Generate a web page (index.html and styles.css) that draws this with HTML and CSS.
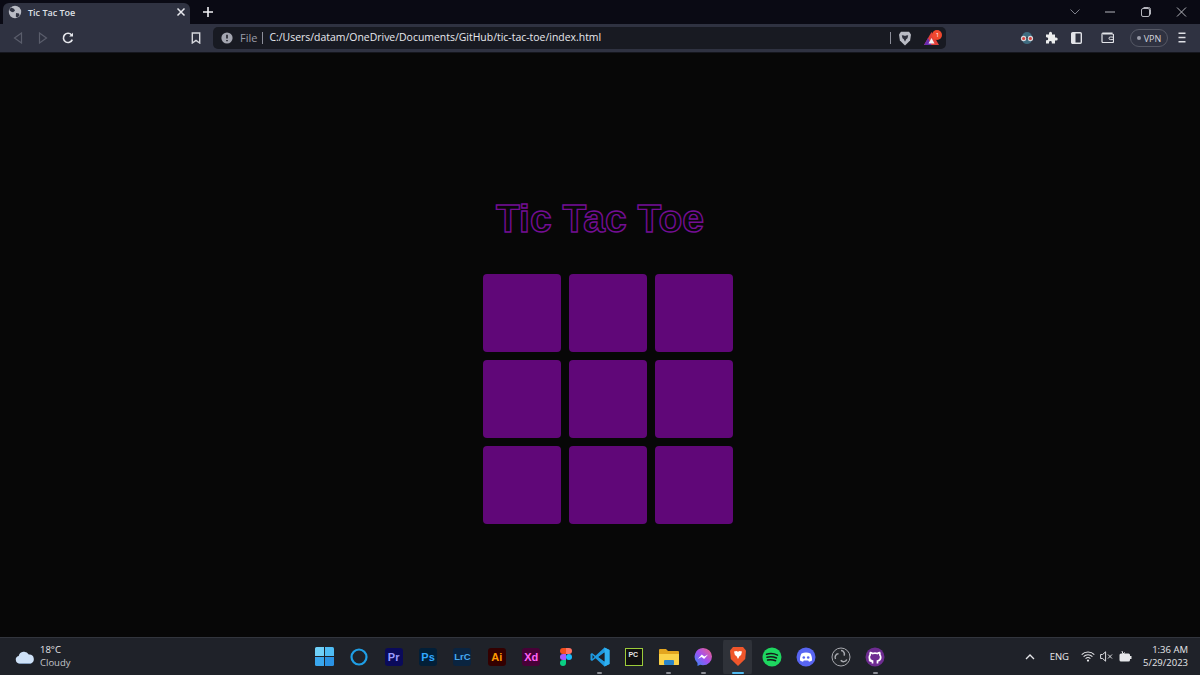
FILE: index.html
```html
<!DOCTYPE html>
<html lang="en">
<head>
<meta charset="utf-8">
<title>Tic Tac Toe</title>
<link rel="stylesheet" href="styles.css">
</head>
<body>
<div class="tabstrip">
  <div class="tab">
    <svg class="tab-globe" width="14" height="14" viewBox="0 0 14 14"><circle cx="7" cy="7" r="6.2" fill="#b9bbc4"/><path d="M3 2.5l3 1.2 1 2-2 1.6-1.8-.6-2-1.6zM8 8l3 .6.6 1.8-2.4 2.4-1.4-1.4z" fill="#2f3241"/></svg>
    <span class="tab-title">Tic Tac Toe</span>
    <svg class="tab-close" width="10" height="10" viewBox="0 0 10 10"><path d="M1.5 1.5l7 7M8.5 1.5l-7 7" stroke="#e8e9ee" stroke-width="1.5"/></svg>
  </div>
  <svg class="new-tab" width="12" height="12" viewBox="0 0 12 12"><path d="M6 1v10M1 6h10" stroke="#f1f1f4" stroke-width="1.6"/></svg>
  <div class="window-controls">
    <svg class="win-btn chevron" width="12" height="8" viewBox="0 0 12 8"><path d="M1.5 1.5L6 6l4.5-4.5" fill="none" stroke="#7d7f8a" stroke-width="1"/></svg>
    <svg class="win-btn" width="36" height="12" viewBox="0 0 36 12"><path d="M13 6h10" stroke="#b4b5bc" stroke-width="1"/></svg>
    <svg class="win-btn" width="36" height="12" viewBox="0 0 36 12"><rect x="13.5" y="2.5" width="8" height="8" rx="1.5" fill="none" stroke="#b4b5bc"/><path d="M15.5 1.5h5a2 2 0 0 1 2 2v5" fill="none" stroke="#b4b5bc"/></svg>
    <svg class="win-btn" width="36" height="12" viewBox="0 0 36 12"><path d="M13 1.5l9 9M22 1.5l-9 9" stroke="#b4b5bc" stroke-width="1"/></svg>
  </div>
</div>

<div class="toolbar">
  <div class="slot"><svg width="10" height="12" viewBox="0 0 10 12"><path d="M8.5 1L1.5 6l7 5z" fill="none" stroke="#5a5d6b" stroke-width="1.2"/></svg></div>
  <div class="slot"><svg width="10" height="12" viewBox="0 0 10 12"><path d="M1.5 1l7 5-7 5z" fill="none" stroke="#5a5d6b" stroke-width="1.2"/></svg></div>
  <div class="slot"><svg width="12" height="12" viewBox="0 0 12 12"><path d="M10.3 7.6A4.6 4.6 0 1 1 9.6 3" fill="none" stroke="#e6e7ec" stroke-width="1.6"/><path d="M11 .8v3.8H7.2z" fill="#e6e7ec"/></svg></div>
  <div class="slot bookmark"><svg width="10" height="12" viewBox="0 0 10 12"><path d="M1.3 1h7.4v10L5 8.4 1.3 11z" fill="none" stroke="#d6d7dd" stroke-width="1.4"/></svg></div>
  <div class="urlbar">
    <svg class="info" width="12" height="12" viewBox="0 0 12 12"><circle cx="6" cy="6" r="5.6" fill="#a4a6b0"/><path d="M6 2.8v3.6M6 8v1.3" stroke="#181a22" stroke-width="1.5"/></svg>
    <span class="file">File</span>
    <span class="sep"></span>
    <span class="url">C:/Users/datam/OneDrive/Documents/GitHub/tic-tac-toe/index.html</span>
    <span class="sep sep-right"></span>
    <svg class="shield" width="14" height="15" viewBox="0 0 14 15"><path d="M3 .8h8l2 2.600-.9 6L7 14.400 1.900 9.400 1 3.400z" fill="#b9bbc4"/><path d="M3.800 4.200l2.200.2L7 5l1-.6 2.200-.2-.7 3-1.300 1L7 10.800 5.800 8.200l-1.300-1z" fill="#2c2e3a"/></svg>
    <div class="rewards">
      <svg width="15" height="13" viewBox="0 0 15 13"><path d="M7.500 0L0 13h15z" fill="#e0403a"/><path d="M0 13L4 6l3.500 7z" fill="#6b2bb0"/><path d="M7.500 6l3 5.500h-6z" fill="#f4f4f6"/></svg>
      <span class="badge">1</span>
    </div>
  </div>
  <div class="slot incognito"><svg width="16" height="14" viewBox="0 0 16 14"><path d="M3 6a5 5 0 0 1 10 0z" fill="#3f6c80"/><path d="M3 8.500c.500 3 2.500 4.500 5 4.500s4.500-1.500 5-4.500z" fill="#3f6c80"/><circle cx="4.600" cy="7.500" r="2.700" fill="#d8d8dc"/><circle cx="11.400" cy="7.500" r="2.700" fill="#d8d8dc"/><circle cx="4.600" cy="7.500" r="1.500" fill="#d8403c"/><circle cx="11.400" cy="7.500" r="1.500" fill="#d8403c"/></svg></div>
  <div class="slot"><svg width="13" height="13" viewBox="0 0 13 13"><path d="M1 3.500h3V2.200a1.500 1.500 0 0 1 3 0v1.300h3v3h1.200a1.500 1.500 0 0 1 0 3H10V12.500H6.800v-1a1.400 1.400 0 0 0-2.800 0v1H1V9.300h.7a1.500 1.500 0 0 0 0-3H1z" fill="#eceded"/></svg></div>
  <div class="slot"><svg width="11" height="12" viewBox="0 0 11 12"><rect x=".7" y=".7" width="9.600" height="10.600" rx="1" fill="none" stroke="#e2e3e8" stroke-width="1.400"/><rect x="1" y="1" width="3.500" height="10" fill="#e2e3e8"/></svg></div>
  <div class="slot wallet"><svg width="13" height="11" viewBox="0 0 13 11"><path d="M11 2V1H2a1.200 1.200 0 0 0-1 1.200v7.300c0 .5.400 1 1 1h9.500c.5 0 1-.5 1-1V3c0-.5-.5-1-1-1H2" fill="none" stroke="#e2e3e8" stroke-width="1.200"/><rect x="8" y="5" width="4.500" height="2.600" rx="1.300" fill="none" stroke="#e2e3e8"/></svg></div>
  <div class="vpn"><span class="vpn-dot"></span>VPN</div>
  <div class="slot menu"><svg width="10" height="11" viewBox="0 0 10 11"><path d="M1.500 1.200h7M1.500 5.500h7M1.500 9.800h7" stroke="#dfe0e5" stroke-width="1.500"/></svg></div>
</div>
<div class="toolbar-edge"></div>

<main class="page">
  <h1 class="game-title">Tic Tac Toe</h1>
  <div class="board">
    <div class="cell"></div><div class="cell"></div><div class="cell"></div>
    <div class="cell"></div><div class="cell"></div><div class="cell"></div>
    <div class="cell"></div><div class="cell"></div><div class="cell"></div>
  </div>
</main>

<footer class="taskbar">
  <div class="weather">
    <svg width="20" height="14" viewBox="0 0 20 14"><path d="M4.500 13.500a3.800 3.800 0 0 1-.8-7.500A5.500 5.500 0 0 1 13.800 4.500a4.600 4.600 0 0 1 1.700 9z" fill="#cfe2f8"/><path d="M4.500 13.500a3.800 3.800 0 0 1-1.500-.4h14a4.600 4.600 0 0 1-1.500.4z" fill="#8fb6e6"/></svg>
    <div class="weather-text"><span class="temp">18°C</span><span class="cond">Cloudy</span></div>
  </div>
  <div class="apps">
    <div class="app"><svg width="19" height="19" viewBox="0 0 19 19"><path d="M0 1.500A1.500 1.500 0 0 1 1.500 0H9v9H0z" fill="#6fd0f8"/><path d="M10 0h7.500A1.500 1.500 0 0 1 19 1.500V9h-9z" fill="#4fbdf5"/><path d="M0 10h9v9H1.500A1.500 1.500 0 0 1 0 17.500z" fill="#3aa7ee"/><path d="M10 10h9v7.500a1.500 1.500 0 0 1-1.500 1.500H10z" fill="#2a92e4"/></svg></div>
    <div class="app"><svg width="18" height="18" viewBox="0 0 18 18"><circle cx="9" cy="9" r="7.500" fill="none" stroke="#1f9fe6" stroke-width="2.200"/></svg></div>
    <div class="app"><span class="tile tile-pr">Pr</span></div>
    <div class="app"><span class="tile tile-ps">Ps</span></div>
    <div class="app"><span class="tile tile-lr">LrC</span></div>
    <div class="app"><span class="tile tile-ai">Ai</span></div>
    <div class="app"><span class="tile tile-xd">Xd</span></div>
    <div class="app"><svg width="12" height="18" viewBox="0 0 12 18"><path d="M3 0h3v6H3a3 3 0 0 1 0-6z" fill="#f24e1e"/><path d="M6 0h3a3 3 0 0 1 0 6H6z" fill="#ff7262"/><path d="M3 6h3v6H3a3 3 0 0 1 0-6z" fill="#a259ff"/><circle cx="9" cy="9" r="3" fill="#1abcfe"/><path d="M3 12h3v3a3 3 0 1 1-3-3z" fill="#0acf83"/></svg></div>
    <div class="app open"><svg width="20" height="20" viewBox="0 0 20 20"><path fill-rule="evenodd" d="M14.500.500L19.500 3v14l-5 2.500-9-8.300L2 14 .500 13V7L2 6l3.500 2.800zM14.500 5.500L8.500 10l6 4.500zM2.500 8v4l2-2z" fill="#1f9ae0"/><path d="M14.500.500L19.500 3v14l-5 2.500z" fill="#2fb0f0"/><path d="M14.500 5.500L8.500 10l6 4.500z" fill="#1f2229"/></svg></div>
    <div class="app"><span class="tile tile-pc">PC</span></div>
    <div class="app open"><svg width="20" height="18" viewBox="0 0 20 18"><path d="M0 2a1 1 0 0 1 1-1h6l2 2h10a1 1 0 0 1 1 1v12a1 1 0 0 1-1 1H1a1 1 0 0 1-1-1z" fill="#e3a51f"/><path d="M0 6h20v10a1 1 0 0 1-1 1H1a1 1 0 0 1-1-1z" fill="#fbd249"/><rect x="5" y="12" width="10" height="5" rx="1" fill="#2a84c9"/></svg></div>
    <div class="app open"><svg width="18" height="18" viewBox="0 0 18 18"><defs><linearGradient id="msg" x1="0" y1="1" x2="1" y2="0"><stop offset="0" stop-color="#2f8cf5"/><stop offset=".5" stop-color="#a44ff0"/><stop offset="1" stop-color="#f5637a"/></linearGradient></defs><path d="M9 0a9 8.600 0 0 1 0 17.200c-1 0-2-.1-2.800-.4L3.500 18v-3A8.600 8.600 0 0 1 9 0z" fill="url(#msg)"/><path d="M3.800 11l4-4.500 2.500 2 3.800-2-4 4.500-2.500-2z" fill="#fff"/></svg></div>
    <div class="app active"><svg width="16" height="19" viewBox="0 0 16 19"><path d="M3 0h10l3 3.500-.8 8.500L8 19 .8 12 0 3.500z" fill="#f0562b"/><path d="M4 4.500L6.500 4 8 4.800 9.500 4l2.500.5-.9 3.500-1.700 1.300L8 12 6.600 9.300 4.900 8z" fill="#fff"/></svg></div>
    <div class="app"><svg width="20" height="20" viewBox="0 0 20 20"><circle cx="10" cy="10" r="9.500" fill="#1ed760"/><path d="M4.500 7.200c3.800-1 7.500-.8 11 .9M5 10.200c3.200-.8 6.300-.6 9.500.8M5.600 13c2.700-.6 5.300-.4 8 .7" fill="none" stroke="#15191a" stroke-width="1.500" stroke-linecap="round"/></svg></div>
    <div class="app"><svg width="20" height="20" viewBox="0 0 20 20"><circle cx="10" cy="10" r="9.500" fill="#5865f2"/><path d="M5.500 6.500c3-1.300 6-1.300 9 0 1.200 2.200 1.700 4.500 1.500 7-1 .7-2 1.100-3 1.300l-.8-1.200H7.800L7 14.800c-1-.2-2-.6-3-1.300-.2-2.500.3-4.800 1.500-7z" fill="#fff"/><circle cx="7.800" cy="10.500" r="1.300" fill="#5865f2"/><circle cx="12.200" cy="10.500" r="1.300" fill="#5865f2"/></svg></div>
    <div class="app"><svg width="20" height="20" viewBox="0 0 20 20"><circle cx="10" cy="10" r="9" fill="#24272c" stroke="#a8aab0" stroke-width="1"/><path d="M10 3.500a3.500 3.500 0 0 1 3 5.200M15.800 12.500a3.500 3.500 0 0 1-6 .8M4.500 12a3.500 3.500 0 0 1 3-5.200" fill="none" stroke="#a8aab0" stroke-width="1.500"/></svg></div>
    <div class="app open"><svg width="20" height="20" viewBox="0 0 20 20"><circle cx="10" cy="10" r="9.500" fill="#6e2c91"/><path d="M7.500 16.500v-2.300c-2.500.4-3-1.200-3.200-1.700M12.500 16.500v-2.500c2-.4 3.200-1.600 3.200-3.700 0-1-.3-1.700-.9-2.400.2-.7.100-1.500-.2-2.200-.7 0-1.400.3-2.100.8a8 8 0 0 0-5 0C6.800 6 6.100 5.700 5.400 5.700c-.3.700-.4 1.500-.2 2.200-.6.700-.9 1.400-.9 2.400 0 2.100 1.200 3.300 3.200 3.700" fill="none" stroke="#fff" stroke-width="1.700"/></svg></div>
  </div>
  <div class="tray">
    <svg class="caret" width="10" height="6" viewBox="0 0 10 6"><path d="M1 5l4-4 4 4" fill="none" stroke="#e6e7ea" stroke-width="1.300"/></svg>
    <span class="lang">ENG</span>
    <svg class="wifi" width="14" height="11" viewBox="0 0 14 11"><path d="M.7 3.600a9 9 0 0 1 12.600 0M2.600 5.600a6.300 6.300 0 0 1 8.800 0M4.600 7.600a3.500 3.500 0 0 1 4.800 0" fill="none" stroke="#e6e7ea" stroke-width="1.100"/><circle cx="7" cy="9.600" r="1.100" fill="#e6e7ea"/></svg>
    <svg class="speaker" width="13" height="11" viewBox="0 0 13 11"><path d="M.6 3.500h2L5.600.8v9.400L2.600 7.500h-2z" fill="none" stroke="#dcdde0"/><path d="M8 3.500l4 4M12 3.500l-4 4" stroke="#dcdde0"/></svg>
    <svg class="battery" width="13" height="11" viewBox="0 0 13 11"><rect x=".5" y="2.500" width="10.500" height="8" rx="1.500" fill="#e6e7ea"/><rect x="11" y="5" width="1.500" height="3" fill="#e6e7ea"/><path d="M3 0l1 3 2-1.500" fill="none" stroke="#e6e7ea"/></svg>
    <div class="clock"><span>1:36 AM</span><span>5/29/2023</span></div>
  </div>
</footer>
</body>
</html>
```

FILE: styles.css
```css
* { box-sizing: border-box; }
html, body { margin: 0; height: 100%; }
body {
  width: 1200px;
  height: 675px;
  overflow: hidden;
  display: flex;
  flex-direction: column;
  background: #070707;
  font-family: "Open Sans", "Noto Sans", sans-serif;
}

/* Tab strip */
.tabstrip {
  height: 24px;
  flex: none;
  display: flex;
  align-items: flex-end;
  padding-left: 3px;
  background: #0a0a14;
}
.tab {
  width: 187px;
  height: 21px;
  display: flex;
  align-items: center;
  padding: 0 4px 3px 5px;
  background: #2f3241;
  border-radius: 6px 6px 0 0;
}
.tab-globe { flex: none; }
.tab-title {
  margin-left: 6px;
  flex: 1;
  font-size: 9px;
  font-weight: 600;
  color: #dfe0e6;
  white-space: nowrap;
}
.tab-close { flex: none; margin-right: 0; }
.new-tab { flex: none; margin: 0 0 6px 12px; }
.window-controls {
  margin-left: auto;
  height: 24px;
  display: flex;
  align-items: center;
  padding-right: 0;
}
.win-btn { flex: none; }
.chevron { margin-right: 11px; }

/* Toolbar */
.toolbar {
  height: 28px;
  flex: none;
  display: flex;
  align-items: center;
  padding-left: 5px;
  background: #2f3241;
}
.toolbar-edge { height: 1px; flex: none; background: #15161d; }
.slot {
  width: 25px;
  height: 28px;
  flex: none;
  display: flex;
  align-items: center;
  justify-content: center;
  padding-bottom: 1px;
}
.bookmark { margin-left: 103px; }
.urlbar {
  width: 733px;
  height: 22px;
  margin-left: 5px;
  flex: none;
  display: flex;
  align-items: center;
  padding-left: 8px;
  background: #181a22;
  border-radius: 5px;
}
.info { flex: none; }
.file { margin: 0 0 2px 7px; font-size: 11px; color: #9b9da8; }
.sep { width: 1px; height: 12px; margin-left: 5px; background: #8d8f9a; flex: none; }
.url {
  margin: 0 0 2px 6px;
  width: 620px;
  flex: none;
  font-size: 10.450px;
  color: #e8e9ee;
  white-space: nowrap;
}
.sep-right { margin-left: 1px; }
.shield { margin-left: 7px; flex: none; }
.rewards { position: relative; margin-left: 12px; width: 15px; height: 13px; flex: none; }
.rewards svg { display: block; }
.badge {
  position: absolute;
  top: -2px;
  right: -3px;
  width: 10px;
  height: 10px;
  border-radius: 50%;
  background: #f0482e;
  color: #fff;
  font-size: 6px;
  line-height: 10px;
  text-align: center;
}
.incognito { margin-left: 68px; }
.wallet { margin-left: 6px; }
.vpn {
  width: 38px;
  height: 18px;
  margin-left: 10px;
  flex: none;
  display: flex;
  align-items: center;
  justify-content: center;
  gap: 3px;
  border: 1px solid #555865;
  border-radius: 9px;
  font-size: 9px;
  color: #d4d6dd;
}
.vpn-dot { width: 4px; height: 4px; border-radius: 50%; background: #9a9ca8; }
.menu { margin-left: 1px; }

/* Page */
.page {
  flex: 1;
  display: flex;
  flex-direction: column;
  align-items: center;
}
.game-title {
  margin: 144px 0 0;
  height: 44px;
  font-family: "Liberation Sans", Arial, sans-serif;
  font-size: 39px;
  line-height: 44px;
  font-weight: 700;
  color: transparent;
  -webkit-text-stroke: 1.400px #740e94;
}
.board {
  margin: 33px 0 0 16px;
  display: grid;
  grid-template-columns: repeat(3, 78px);
  grid-auto-rows: 78px;
  gap: 8px;
}
.cell { background: #600778; border-radius: 4px; }

/* Taskbar */
.taskbar {
  height: 38px;
  flex: none;
  display: grid;
  grid-template-columns: 1fr auto 1fr;
  align-items: center;
  background: #1f2229;
  border-top: 1px solid #32353d;
  color: #e6e7ea;
}
.weather { display: flex; align-items: center; padding-left: 15px; gap: 5px; }
.weather-text { display: flex; flex-direction: column; margin-bottom: 2px; font-size: 9.500px; line-height: 13px; }
.cond { color: #c3c5ca; }
.apps { display: flex; }
.app {
  position: relative;
  width: 34.400px;
  height: 34px;
  display: flex;
  align-items: center;
  justify-content: center;
}
.app.open::after, .app.active::after {
  content: "";
  position: absolute;
  bottom: 0;
  left: 50%;
  width: 5px;
  height: 2px;
  margin-left: -2.500px;
  border-radius: 1px;
  background: #8b8d94;
}
.app.active {
  padding: 0 3px;
  background: #2f3239;
  background-clip: content-box;
  border-radius: 4px;
}
.app.active::after { width: 12px; margin-left: -6px; background: #4fb8ee; }
.tile {
  width: 18px;
  height: 18px;
  display: flex;
  align-items: center;
  justify-content: center;
  border-radius: 3px;
  font-family: "Liberation Sans", Arial, sans-serif;
  font-size: 11px;
  font-weight: 700;
}
.tile-pr { background: #0a0a5a; color: #9a9cff; }
.tile-ps { background: #021f38; color: #31a8ff; }
.tile-lr { background: #0a2440; color: #47a8f0; font-size: 9.500px; }
.tile-ai { background: #330000; color: #ff9a00; }
.tile-xd { background: #470137; color: #ff61f6; }
.tile-pc {
  background: #111;
  color: #e6e6e6;
  font-size: 7px;
  align-items: flex-start;
  justify-content: flex-start;
  padding: 2px 0 0 2px;
  border: 1.500px solid #9ccc3a;
  border-radius: 0;
}
.tray { display: flex; align-items: center; justify-content: flex-end; padding-right: 12px; }
.caret { flex: none; margin-right: 15px; }
.lang { font-size: 9.500px; margin-right: 12px; }
.wifi { flex: none; margin-right: 5px; }
.speaker { flex: none; margin-right: 6px; }
.battery { flex: none; margin-right: 11px; }
.clock { display: flex; flex-direction: column; align-items: flex-end; margin-bottom: 2px; font-size: 9.500px; line-height: 13px; }
```
